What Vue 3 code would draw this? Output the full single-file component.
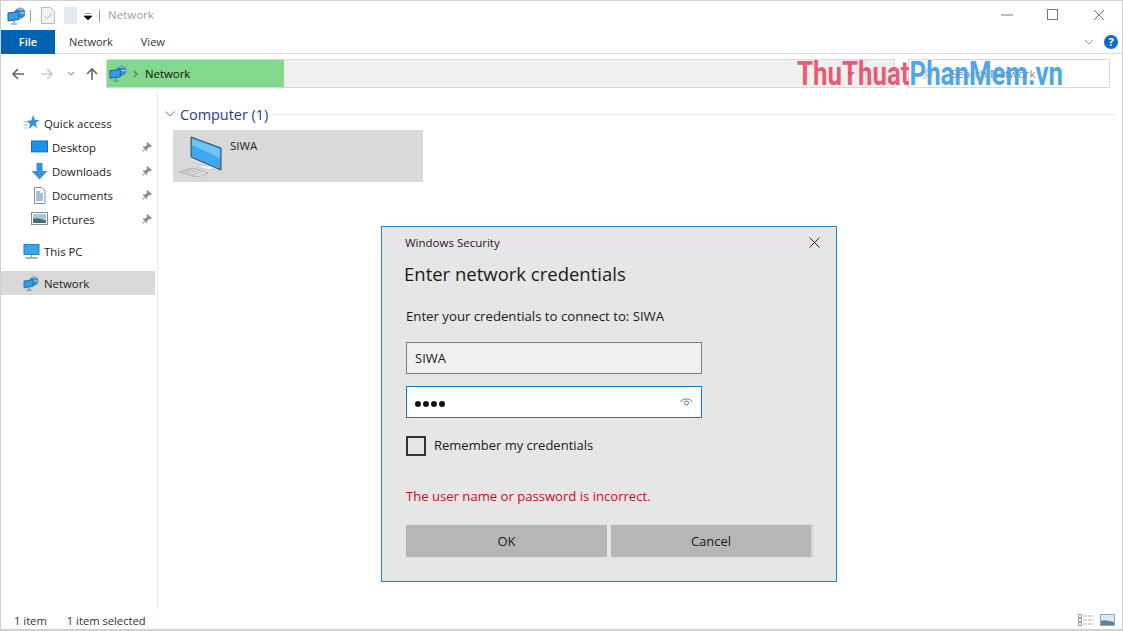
<script setup>
const pinned = [
  { name: 'Desktop', icon: 'desktop' },
  { name: 'Downloads', icon: 'downloads' },
  { name: 'Documents', icon: 'documents' },
  { name: 'Pictures', icon: 'pictures' }
]
</script>

<template>
  <div class="window">
    <header class="titlebar">
      <svg class="qa-net" width="20" height="18" viewBox="0 0 20 18">
        <circle cx="13" cy="6" r="5.5" fill="#3d8fc4" />
        <path d="M10 1.5c2 1 4 1 6 .5M8 6h10" stroke="#bfe0f2" fill="none" />
        <path d="M1 6l11-1.500v8L1 14z" fill="#2f9fe8" stroke="#1d5f96" />
        <path d="M7 14v2M4 17h6" stroke="#5d7f9c" stroke-width="1.2" />
      </svg>
      <span class="tb-sep"></span>
      <svg width="14" height="17" viewBox="0 0 14 17" class="qa-doc">
        <path d="M.5.5h9l4 4v12H.5z" fill="#eef3f8" stroke="#a9bdd3" />
        <path d="M4 9l2.5 2.5L11 6" fill="none" stroke="#a9b8c6" />
      </svg>
      <span class="qa-blank"></span>
      <svg width="8" height="7" viewBox="0 0 8 7" class="qa-more">
        <path d="M1 0h6M0 3h8l-4 4z" stroke="#111" stroke-width=".8" fill="#111" />
      </svg>
      <span class="tb-sep last"></span>
      <span class="tb-title">Network</span>
      <div class="win-buttons">
        <svg width="12" height="12" viewBox="0 0 12 12"><path d="M0 6h12" stroke="#777" /></svg>
        <svg width="12" height="12" viewBox="0 0 12 12"><rect x=".5" y=".5" width="10" height="10" fill="none" stroke="#777" /></svg>
        <svg width="12" height="12" viewBox="0 0 12 12"><path d="M1 1l10 10M11 1L1 11" stroke="#777" /></svg>
      </div>
    </header>

    <nav class="ribbon">
      <span class="tab file">File</span>
      <span class="tab">Network</span>
      <span class="tab">View</span>
      <svg class="collapse" width="10" height="6" viewBox="0 0 10 6"><path d="M1 1l4 4 4-4" fill="none" stroke="#999" /></svg>
      <span class="help">?</span>
    </nav>

    <div class="addressbar">
      <div class="nav-arrows">
        <svg class="back" width="14" height="14" viewBox="0 0 14 14"><path d="M13 7H2M7 2L2 7l5 5" fill="none" stroke="#666" stroke-width="1.6" /></svg>
        <svg class="forward" width="14" height="14" viewBox="0 0 14 14"><path d="M1 7h11M7 2l5 5-5 5" fill="none" stroke="#ccc" stroke-width="1.6" /></svg>
        <svg class="recent" width="8" height="5" viewBox="0 0 8 5"><path d="M1 1l3 3 3-3" fill="none" stroke="#777" /></svg>
        <svg class="up" width="14" height="14" viewBox="0 0 14 14"><path d="M7 13V2M2 7l5-5 5 5" fill="none" stroke="#666" stroke-width="1.6" /></svg>
      </div>
      <div class="path">
        <div class="path-progress">
          <svg width="19" height="17" viewBox="0 0 20 18">
            <circle cx="13" cy="6" r="5.5" fill="#3d8fc4" />
            <path d="M10 1.5c2 1 4 1 6 .5M8 6h10" stroke="#bfe0f2" fill="none" />
            <path d="M1 6l11-1.500v8L1 14z" fill="#2f9fe8" stroke="#1d5f96" />
            <path d="M7 14v2M4 17h6" stroke="#5d7f9c" stroke-width="1.2" />
          </svg>
          <svg class="crumb" width="5" height="8" viewBox="0 0 5 8"><path d="M1 1l3 3-3 3" fill="none" stroke="#777" stroke-width="1.4" /></svg>
          <span>Network</span>
        </div>
        <svg class="path-chev" width="8" height="5" viewBox="0 0 8 5"><path d="M1 1l3 3 3-3" fill="none" stroke="#666" stroke-width="1.2" /></svg>
        <span class="path-drop"></span>
      </div>
      <div class="search">
        <svg width="12" height="12" viewBox="0 0 12 12"><circle cx="7" cy="5" r="3.500" fill="none" stroke="#aaa" /><path d="M4.500 7.500L1 11" stroke="#aaa" /></svg>
        <span>Search Network</span>
      </div>
    </div>

    <div class="body">
      <aside class="sidebar">
        <div class="nav-row top">
          <svg class="root-icon" width="16" height="16" viewBox="0 0 16 16">
            <path d="M9.500 0l1.800 4.800 4.700.2-3.700 3 1.400 5-4.200-2.800L5.300 14l1.300-5L3 5.800l4.700-.2z" fill="#2f8fe0" />
            <path d="M0 7h4M0 10h4M1 13h3" stroke="#7bbcec" />
          </svg>
          <span>Quick access</span>
        </div>
        <div v-for="item in pinned" :key="item.name" class="nav-row child">
          <svg v-if="item.icon === 'desktop'" width="17" height="14" viewBox="0 0 17 14">
            <rect x=".5" y="1" width="16" height="11" fill="#1b93ea" stroke="#0f6fc0" />
            <path d="M1 12.500h15" stroke="#9ad0f5" />
          </svg>
          <svg v-else-if="item.icon === 'downloads'" width="17" height="17" viewBox="0 0 17 17">
            <path d="M5.500 0h6v8H16.500l-8 8.500-8-8.500h5z" fill="#3a8fdc" />
          </svg>
          <svg v-else-if="item.icon === 'documents'" width="17" height="17" viewBox="0 0 17 17">
            <path d="M3.500 .5h7l3.500 3.500v12.500H3.500z" fill="#fff" stroke="#8a8a8a" />
            <path d="M5 5h4M5 7h7M5 9h7M5 11h7M5 13h7" stroke="#3a84b8" />
          </svg>
          <svg v-else width="17" height="14" viewBox="0 0 17 14">
            <rect x=".5" y=".5" width="16" height="12" fill="#fff" stroke="#8a8a8a" />
            <rect x="2" y="2" width="13" height="5" fill="#a7c6de" />
            <path d="M2 7c4-2 8 0 13 1v3H2z" fill="#4d6c6c" />
          </svg>
          <span class="label">{{ item.name }}</span>
          <svg class="pin" width="11" height="11" viewBox="0 0 11 11">
            <path d="M6.500 0L11 4.500 9.500 5.500 8 5 6 7.500V9.500L1.500 4.500H4L6 3 5.500 1.500z M3 7L.5 10.500 4 8z" fill="#8c8c8c" />
          </svg>
        </div>
        <div class="nav-row top spaced">
          <svg class="root-icon" width="16" height="15" viewBox="0 0 16 15">
            <rect x=".5" y=".5" width="15" height="10" fill="#35a5ee" stroke="#2a7fc0" />
            <path d="M8 11v2M2 14h12" stroke="#7c9cb4" stroke-width="1.300" />
          </svg>
          <span>This PC</span>
        </div>
        <div class="nav-row top spaced selected">
          <svg class="root-icon" width="17" height="15" viewBox="0 0 20 18">
            <circle cx="13" cy="6" r="5.500" fill="#3d8fc4" />
            <path d="M10 1.500c2 1 4 1 6 .5M8 6h10" stroke="#bfe0f2" fill="none" />
            <path d="M1 6l11-1.500v8L1 14z" fill="#2f9fe8" stroke="#1d5f96" />
            <path d="M7 14v2M4 17h6" stroke="#5d7f9c" stroke-width="1.200" />
          </svg>
          <span>Network</span>
        </div>
      </aside>

      <main class="content">
        <div class="group-head">
          <svg width="10" height="6" viewBox="0 0 10 6"><path d="M.5.500L5 5l4.500-4.500" fill="none" stroke="#888" /></svg>
          <span class="group-title">Computer (1)</span>
          <span class="group-line"></span>
        </div>
        <div class="tile">
          <svg class="pc" width="46" height="46" viewBox="0 0 46 46">
            <path d="M22 32l-2 2 10 3 8-1v-3z" fill="#efefef" stroke="#b5b5b5" stroke-width=".6" />
            <path d="M13 4l30 11v22L13 24z" fill="#3fa9f0" stroke="#2c3b48" stroke-width=".9" />
            <path d="M14 6l28 10v9L14 12z" fill="#7fd2fb" opacity=".7" />
            <path d="M1 39l13-4 16 5-11 4z" fill="#f1f1f1" stroke="#a0a0a0" stroke-width=".7" />
            <path d="M5 39.500l13-4M9 40.800l13-4M13 42l13-4M4 38l15 5M7 37l15 5M10 36l15 5" stroke="#a8a8a8" stroke-width=".6" />
          </svg>
          <span class="tile-name">SIWA</span>
        </div>
      </main>
    </div>

    <footer class="status">
      <span>1 item</span>
      <span>1 item selected</span>
      <div class="views">
        <svg width="16" height="12" viewBox="0 0 16 12">
          <path d="M.5.500h3v3h-3zM.5 4.500h3v3h-3zM.5 8.500h3v3h-3z" fill="none" stroke="#9a9a9a" />
          <path d="M5 2h11M5 6h11M5 10h11" stroke="#b4b4b4" stroke-dasharray="4 1" />
        </svg>
        <svg width="15" height="12" viewBox="0 0 15 12">
          <rect x=".5" y=".5" width="14" height="11" fill="#dbe9f2" stroke="#8fa9bb" />
          <path d="M1 7c4-2 8 0 13 1v3H1z" fill="#5f8296" />
        </svg>
      </div>
    </footer>

    <section class="dialog">
      <div class="dialog-head">
        <span>Windows Security</span>
        <svg width="11" height="11" viewBox="0 0 11 11"><path d="M.5.500l10 10M10.500.500l-10 10" stroke="#222" /></svg>
      </div>
      <h1>Enter network credentials</h1>
      <p class="prompt">Enter your credentials to connect to: SIWA</p>
      <div class="field">SIWA</div>
      <div class="field focused">
        <span class="dots">
          <i></i><i></i><i></i><i></i>
        </span>
        <svg width="13" height="10" viewBox="0 0 13 10">
          <path d="M.5 5C3 1 10 1 12.500 5" fill="none" stroke="#555" stroke-width=".8" />
          <circle cx="6.500" cy="6" r="2" fill="none" stroke="#555" stroke-width=".8" />
        </svg>
      </div>
      <div class="remember">
        <span class="box"></span>
        <span>Remember my credentials</span>
      </div>
      <p class="error">The user name or password is incorrect.</p>
      <div class="actions">
        <button type="button">OK</button>
        <button type="button">Cancel</button>
      </div>
    </section>

    <div class="watermark"><b class="red">ThuThuat</b><b class="blue">PhanMem.vn</b></div>
  </div>
</template>

<style>
html, body { margin: 0; padding: 0; background: #fff; }
</style>

<style scoped>
.window {
  position: relative;
  width: 1123px;
  height: 631px;
  box-sizing: border-box;
  border: 1px solid #cfcfcf;
  border-bottom: 2px solid #d0d0d0;
  background: #fff;
  display: flex;
  flex-direction: column;
  overflow: hidden;
  font-family: "Open Sans", "Noto Sans", sans-serif;
  font-size: 11.400px;
  color: #222;
}
.titlebar {
  height: 29px;
  flex: none;
  display: flex;
  align-items: center;
  padding-left: 6px;
}
.qa-doc { margin-left: 10px; }
.qa-blank { width: 13px; height: 17px; background: #e3e9f2; margin-left: 9px; }
.qa-more { margin-left: 7px; margin-top: 2px; }
.tb-sep { width: 1px; height: 12px; background: #999; margin-left: 3px; }
.tb-sep.last { margin-left: 7px; }
.tb-title { margin: -2px 0 0 8px; color: #a0a0a0; font-size: 11.500px; }
.win-buttons {
  margin-left: auto;
  display: flex;
  align-items: center;
  gap: 34px;
  padding-right: 17px;
  margin-top: -2px;
}
.ribbon {
  height: 24px;
  box-sizing: border-box;
  flex: none;
  display: flex;
  align-items: center;
  border-bottom: 1px solid #dcdcdc;
}
.tab {
  height: 24px;
  line-height: 24px;
  padding: 0 14px;
  font-size: 11px;
  color: #333;
}
.tab.file {
  width: 54px;
  box-sizing: border-box;
  padding: 0;
  text-align: center;
  background: #0063b1;
  color: #fff;
  font-weight: 600;
}
.collapse { margin-left: auto; margin-right: 10px; }
.help {
  width: 14px;
  height: 14px;
  border-radius: 50%;
  background: #0a6cc4;
  color: #fff;
  font-size: 11px;
  font-weight: 700;
  line-height: 14px;
  text-align: center;
  margin-right: 4px;
}
.addressbar {
  height: 38px;
  flex: none;
  display: flex;
  align-items: flex-start;
  box-sizing: border-box;
  padding-top: 5px;
}
.nav-arrows {
  width: 105px;
  height: 29px;
  flex: none;
  display: flex;
  align-items: center;
  box-sizing: border-box;
  padding-left: 10px;
}
.forward { margin-left: 15px; }
.recent { margin-left: 13px; }
.up { margin-left: 10px; }
.path {
  width: 789px;
  height: 29px;
  box-sizing: border-box;
  border: 1px solid #d9d9d9;
  background: #f0f0f0;
  display: flex;
  align-items: stretch;
  flex: none;
}
.path-progress {
  width: 177px;
  background: #83d88e;
  display: flex;
  align-items: center;
  padding-left: 2px;
  box-sizing: border-box;
  color: #111;
}
.crumb { margin-left: 5px; margin-right: 7px; }
.path-chev { margin: 11px 10px 0 auto; }
.path-drop {
  width: 28px;
  border-left: 1px solid #d9d9d9;
}
.search {
  margin-left: 13px;
  width: 202px;
  height: 29px;
  box-sizing: border-box;
  border: 1px solid #d9d9d9;
  display: flex;
  align-items: center;
  gap: 17px;
  padding-left: 13px;
  color: #8a8a8a;
}
.body {
  flex: 1;
  display: flex;
  min-height: 0;
}
.sidebar {
  width: 157px;
  flex: none;
  box-sizing: border-box;
  border-right: 1px solid #eaeaea;
  padding: 19px 2px 0 0;
}
.nav-row {
  height: 24px;
  display: flex;
  align-items: center;
  padding-left: 22px;
  position: relative;
}
.nav-row.child { padding-left: 30px; }
.nav-row svg:first-child { flex: none; }
.nav-row.top > svg { margin-right: 4px; width: 17px; }
.nav-row.child > svg:first-child { margin-right: 4px; }
.nav-row.spaced { margin-top: 8px; }
.nav-row.selected { background: #d9d9d9; }
.pin { position: absolute; right: 3px; top: 7px; }
.content {
  flex: 1;
  padding: 13px 7px 0 15px;
  min-width: 0;
}
.group-head {
  display: flex;
  align-items: center;
  height: 18px;
  margin-left: -8px;
}
.group-title {
  font-size: 14.400px;
  color: #1e3a8a;
  margin-left: 5px;
  white-space: nowrap;
}
.group-line {
  flex: 1;
  height: 1px;
  background: #e5e5e5;
  margin-left: 4px;
}
.tile {
  margin-top: 7px;
  width: 250px;
  height: 52px;
  background: #d9d9d9;
  display: flex;
  align-items: flex-start;
}
.pc { margin-left: 5px; margin-top: 3px; }
.tile-name { margin-left: 6px; margin-top: 8px; font-size: 11.400px; }
.status {
  height: 20px;
  box-sizing: border-box;
  padding: 2px 0 0 13px;
  flex: none;
  display: flex;
  align-items: center;
  gap: 20px;
  font-size: 11.200px;
  color: #333;
}
.views {
  margin-left: auto;
  display: flex;
  gap: 6px;
  align-items: center;
  padding-right: 7px;
}
.dialog {
  position: absolute;
  left: 380px;
  top: 225px;
  width: 456px;
  height: 356px;
  box-sizing: border-box;
  border: 1px solid #1f87c9;
  background: #e6e6e6;
  padding: 0 24px;
  display: flex;
  flex-direction: column;
  color: #1a1a1a;
  font-size: 13px;
}
.dialog-head {
  height: 31px;
  flex: none;
  display: flex;
  align-items: center;
  justify-content: space-between;
  font-size: 11.500px;
  margin: 0 -8px 0 -1px;
}
h1 {
  margin: 3px 0 0 -2px;
  font-size: 18.500px;
  line-height: 26px;
  font-weight: 400;
}
.prompt {
  margin: 19px 0 0;
  line-height: 20px;
  font-size: 13.200px;
}
.field {
  margin-top: 16px;
  width: 296px;
  height: 32px;
  flex: none;
  box-sizing: border-box;
  border: 1px solid #7c7c7c;
  background: #f0f0f0;
  padding: 0 8px;
  display: flex;
  align-items: center;
  font-size: 13px;
}
.field.focused {
  margin-top: 12px;
  border-color: #0c78c8;
  background: #fff;
  justify-content: space-between;
}
.dots { display: flex; gap: 2px; margin-top: 4px; }
.dots i { width: 6px; height: 6px; border-radius: 50%; background: #111; display: block; }
.remember {
  margin-top: 18px;
  display: flex;
  align-items: center;
  gap: 8px;
  font-size: 13px;
}
.remember span:last-child { margin-top: -2px; }
.box {
  width: 20px;
  height: 20px;
  box-sizing: border-box;
  border: 2px solid #333;
}
.error {
  margin: 30px 0 0;
  line-height: 20px;
  color: #c50f0f;
  font-size: 13.100px;
}
.actions {
  margin-top: 19px;
  display: flex;
  gap: 4px;
}
button {
  width: 201px;
  height: 32px;
  border: 0;
  padding: 0;
  background: #b6b6b6;
  font-family: inherit;
  font-size: 13px;
  color: #1a1a1a;
}
.actions button:last-child { width: 200px; box-shadow: 2px 0 2px #cfcfcf; }
.watermark {
  position: absolute;
  left: 796px;
  top: 53px;
  white-space: nowrap;
  font-family: "Roboto", sans-serif;
  font-size: 34px;
  line-height: 38px;
  transform: scaleX(.76);
  transform-origin: left center;
}
.red { color: #e84a68; font-weight: 700; opacity: .9; }
.blue { color: #3a9ee8; font-weight: 700; opacity: .9; }
</style>
